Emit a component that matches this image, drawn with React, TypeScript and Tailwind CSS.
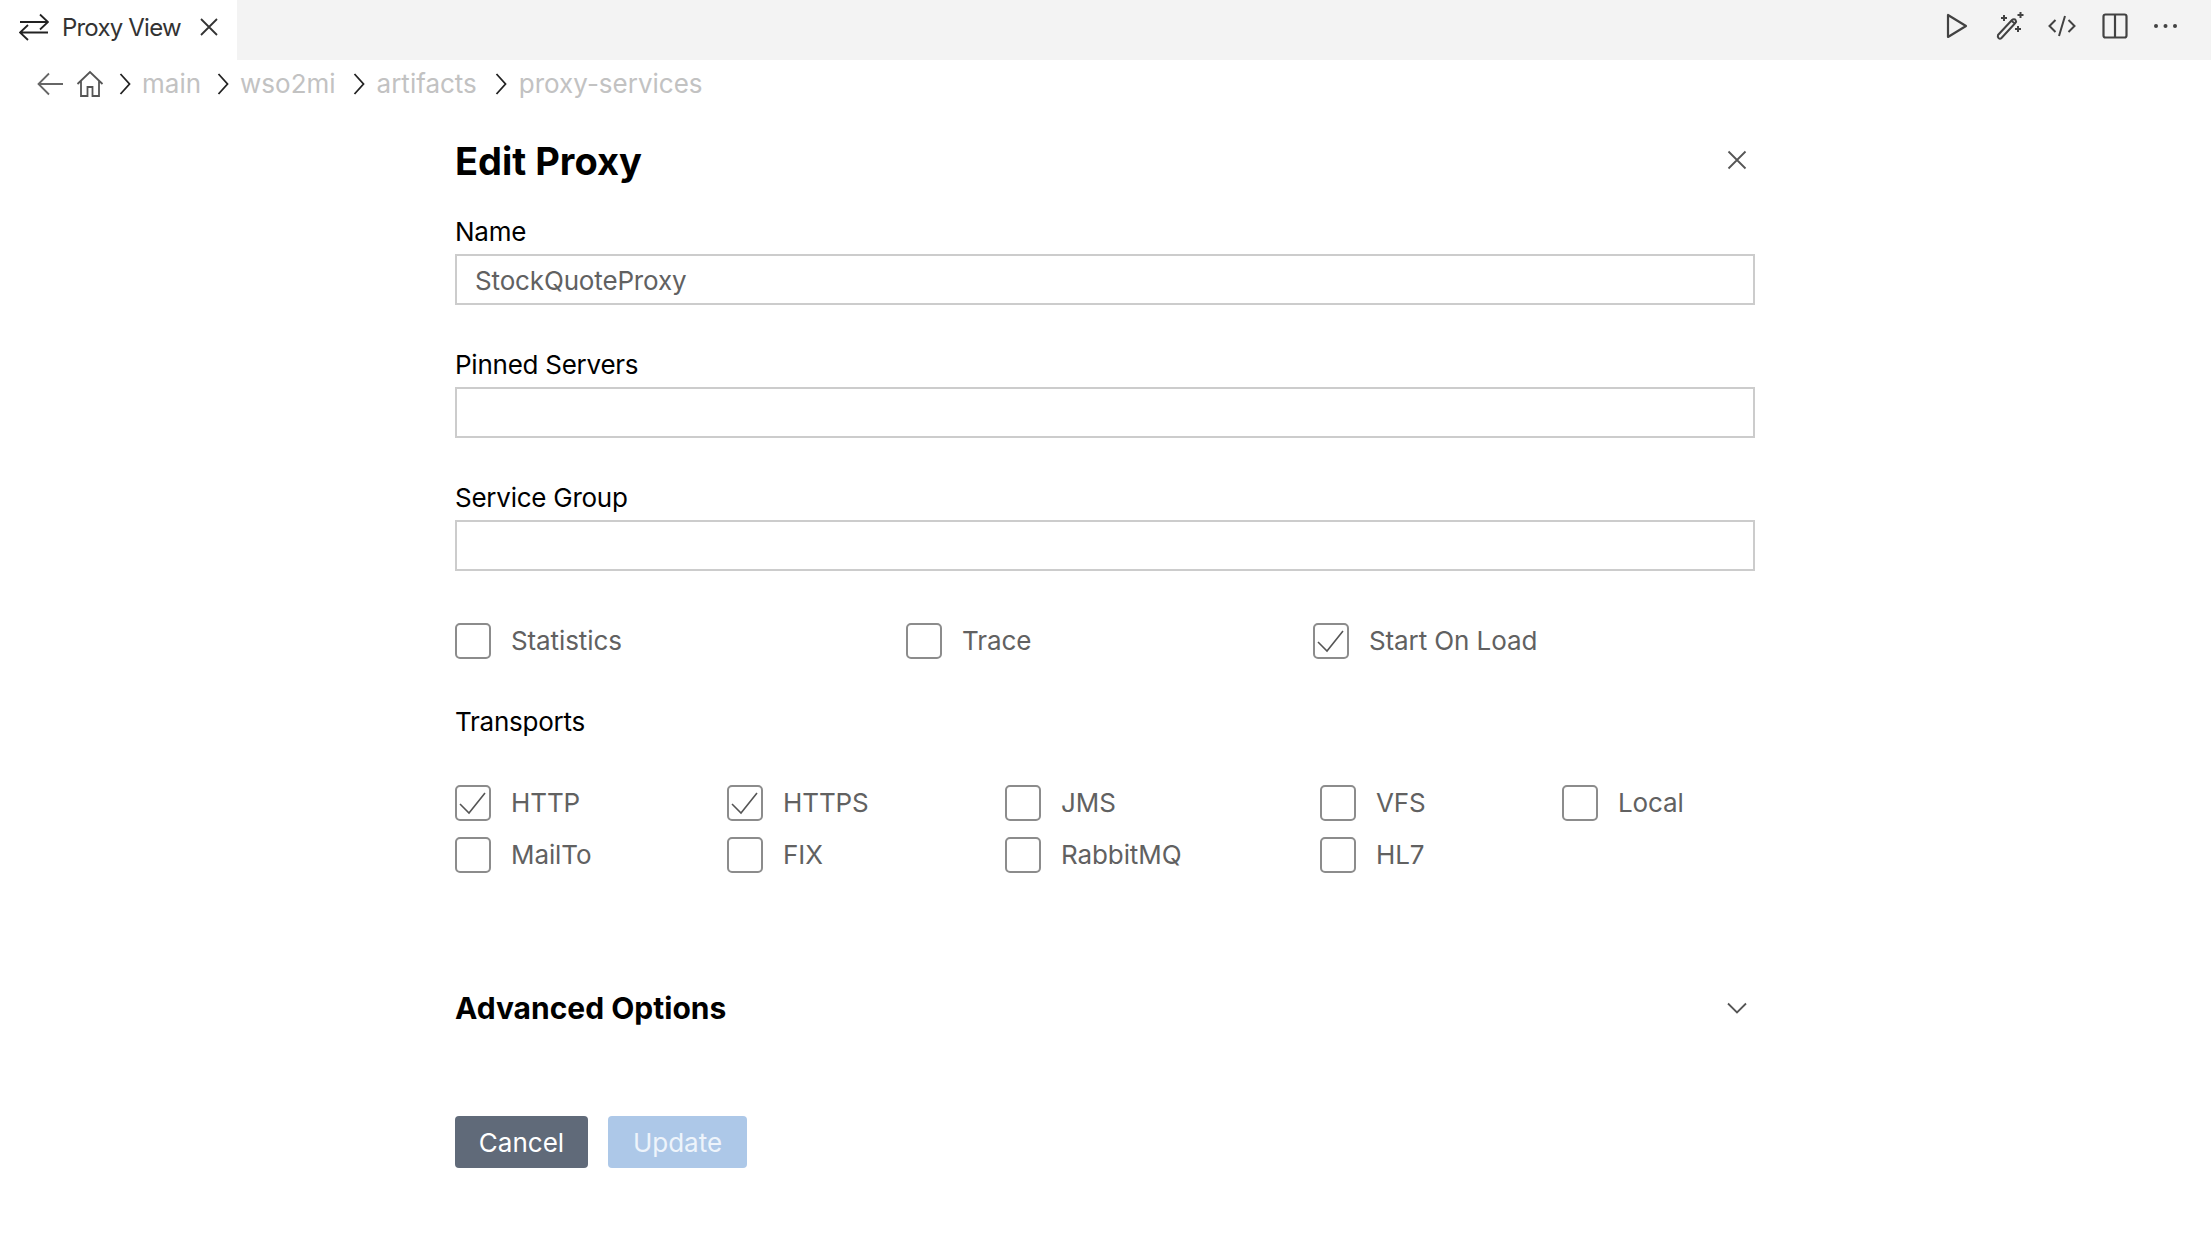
const Checkbox = ({ label, checked }: { label: string; checked?: boolean }) => (
  <label className="flex h-9 items-center gap-5">
    <span className="flex h-9 w-9 shrink-0 items-center justify-center rounded-[5px] border-2 border-[#8c8c8c] bg-white">
      {checked && (
        <svg width="32" height="32" viewBox="0 0 32 32" fill="none" stroke="#555555" strokeWidth="1.6">
          <path d="M3 17l9 9L28 6" />
        </svg>
      )}
    </span>
    <span className="text-[26px] leading-none tracking-[-0.1px] text-[#616161]">{label}</span>
  </label>
);

const Field = ({ label, value, className }: { label: string; value?: string; className?: string }) => (
  <div className={className}>
    <div className="h-[34px] text-[26px] leading-[34px] tracking-[-0.25px] text-black">{label}</div>
    <div className="mt-[5px] flex h-[51px] items-center border-2 border-[#cccccc] bg-white px-[18px] pt-[1px] text-[26px] tracking-[-0.15px] text-[#616161]">
      {value}
    </div>
  </div>
);

const Crumb = ({ label, chevron, text }: { label: string; chevron: string; text: string }) => (
  <>
    <svg width="12" height="24" viewBox="0 0 12 24" fill="none" stroke="#222222" strokeWidth="1.800" className={`${chevron} shrink-0`}>
      <path d="M1.500 2 10.500 12l-9 10" />
    </svg>
    <span className={`${text} text-[26px] leading-none text-[#c2c2c2]`}>{label}</span>
  </>
);

export default function App() {
  return (
    <div className="min-h-[1250px] bg-white font-['Inter',sans-serif]">
      <header className="flex h-[60px] items-center justify-between bg-[#f3f3f3]">
        <div className="flex h-full w-[237px] items-center bg-white pb-[4px] pl-[19px]">
          <svg width="30" height="28" viewBox="0 0 30 28" fill="none" stroke="#222222" strokeWidth="1.800" className="mb-[2px] shrink-0">
            <path d="M1 9h28M21 1.500 29 9l-8 7.500" />
            <path d="M29 19.500H1M9 12l-8 7.500L9 27" />
          </svg>
          <span className="ml-[13px] whitespace-nowrap text-[24px] tracking-[-0.8px] text-[#333333]">Proxy View</span>
          <svg width="20" height="20" viewBox="0 0 20 20" fill="none" stroke="#333333" strokeWidth="1.800" className="mb-[3px] ml-[18px] shrink-0">
            <path d="M2 2l16 16M18 2 2 18" />
          </svg>
        </div>
        <div className="mr-[34px] flex items-center pb-[8px]">
          <svg width="22" height="26" viewBox="0 0 22 26" fill="none" stroke="#424242" strokeWidth="2.200">
            <path d="M2 2v22L20 13z" strokeLinejoin="round" />
          </svg>
          <svg width="29" height="28" viewBox="0 0 29 28" fill="none" stroke="#424242" strokeWidth="2" className="ml-[28px]">
            <path d="M2 23 16 8c1-1 3-1 3.600 0 .7 1 .5 2.200-.3 3L5.500 26c-1 1-2.500.8-3 0-.6-.8-.9-1.900-.5-3z" />
            <path d="M15.500 9l3.500 2.500M8 3v6M5 6h6M24.500 0v6M21.500 3h6M22 14v6M19 17h6" />
          </svg>
          <svg width="28" height="22" viewBox="0 0 28 22" fill="none" stroke="#424242" strokeWidth="2" className="ml-[23px]">
            <path d="M7.500 5 1.500 11l6 6M20.500 5l6 6-6 6M17 1l-6 20" />
          </svg>
          <svg width="26" height="26" viewBox="0 0 26 26" fill="none" stroke="#424242" strokeWidth="2.200" className="ml-[26px]">
            <rect x="1.500" y="1.500" width="23" height="23" rx="2" />
            <path d="M13 1.500v23" />
          </svg>
          <svg width="23" height="4" viewBox="0 0 23 4" fill="#424242" className="ml-[26px]">
            <circle cx="2" cy="2" r="2" />
            <circle cx="11.500" cy="2" r="2" />
            <circle cx="21" cy="2" r="2" />
          </svg>
        </div>
      </header>

      <nav className="flex h-[48px] items-center pl-[37px]">
        <svg width="26" height="24" viewBox="0 0 26 24" fill="none" stroke="#666666" strokeWidth="1.800" className="shrink-0">
          <path d="M1.500 12H26M12 1.500 1.500 12 12 22.500" />
        </svg>
        <svg width="28" height="28" viewBox="0 0 28 28" fill="none" stroke="#555555" strokeWidth="1.800" className="ml-[13px] shrink-0">
          <path d="M1.500 14 14 2l12.500 12M5 11v15h6.500v-9h5v9H23V11" />
        </svg>
        <Crumb label="main" chevron="ml-[15px]" text="ml-[11px]" />
        <Crumb label="wso2mi" chevron="ml-[16px]" text="ml-[11px]" />
        <Crumb label="artifacts" chevron="ml-[17px]" text="ml-[12px]" />
        <Crumb label="proxy-services" chevron="ml-[18px]" text="ml-[12px]" />
      </nav>

      <main className="ml-[455px] w-[1300px]">
        <div className="mt-[27px] flex h-[52px] items-center justify-between">
          <h1 className="text-[38px] font-bold leading-none text-black">Edit Proxy</h1>
          <svg width="20" height="20" viewBox="0 0 20 20" fill="none" stroke="#555555" strokeWidth="1.800" className="mr-2 mb-[3px]">
            <path d="M1.500 1.500l17 17M18.500 1.500l-17 17" />
          </svg>
        </div>
        <Field label="Name" value="StockQuoteProxy" className="mt-7" />
        <Field label="Pinned Servers" className="mt-[43px]" />
        <Field label="Service Group" className="mt-[43px]" />

        <div className="mt-[52px] grid grid-cols-[451px_407px_1fr]">
          <Checkbox label="Statistics" />
          <Checkbox label="Trace" />
          <Checkbox label="Start On Load" checked />
        </div>

        <div className="mt-[45px] h-[36px] text-[26px] leading-[36px] tracking-[-0.25px] text-black">Transports</div>

        <div className="mt-[45px] grid grid-cols-[272px_278px_315px_242px_1fr] gap-y-4">
          <Checkbox label="HTTP" checked />
          <Checkbox label="HTTPS" checked />
          <Checkbox label="JMS" />
          <Checkbox label="VFS" />
          <Checkbox label="Local" />
          <Checkbox label="MailTo" />
          <Checkbox label="FIX" />
          <Checkbox label="RabbitMQ" />
          <Checkbox label="HL7" />
        </div>

        <div className="mt-[114px] flex h-[42px] items-center justify-between">
          <span className="text-[30px] font-bold text-black">Advanced Options</span>
          <svg width="20" height="12" viewBox="0 0 20 12" fill="none" stroke="#555555" strokeWidth="1.800" className="mr-2">
            <path d="M1 1.500l9 9 9-9" />
          </svg>
        </div>

        <div className="mt-[87px] flex gap-5">
          <button className="h-[52px] w-[133px] rounded-[4px] bg-[#606a79] text-[26px] text-white">Cancel</button>
          <button className="h-[52px] w-[139px] rounded-[4px] bg-[#adc8e8] text-[26px] text-[#eef4fb]">Update</button>
        </div>
      </main>
    </div>
  );
}
